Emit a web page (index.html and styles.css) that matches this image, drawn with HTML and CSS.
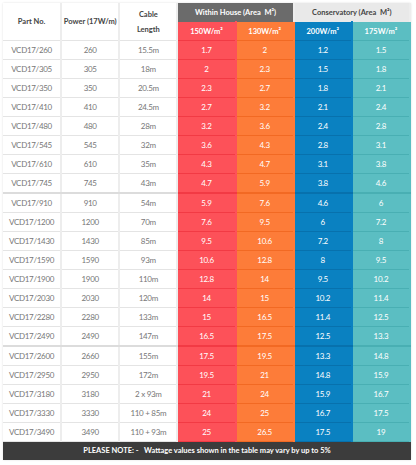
FILE: index.html
```html
<!DOCTYPE html>
<html lang="en">
<head>
    <meta charset="UTF-8">
    <meta name="viewport" content="width=device-width, initial-scale=1.0">
    <title>Heating Cable Sizes</title>
    <link rel="stylesheet" href="styles.css">
</head>
<body>
    <div class="sizes">
        <table class="size-table">
            <thead>
                <tr>
                    <th class="plain" rowspan="2">Part No.</th>
                    <th class="plain" rowspan="2">Power (17W/m)</th>
                    <th class="plain" rowspan="2">Cable<br>Length</th>
                    <th class="house" colspan="2">Within House (Area&nbsp; M²)</th>
                    <th class="conserv" colspan="2">Conservatory (Area&nbsp; M²)</th>
                </tr>
                <tr>
                    <th class="red">150W/m²</th>
                    <th class="orange">130W/m²</th>
                    <th class="blue">200W/m²</th>
                    <th class="teal">175W/m²</th>
                </tr>
            </thead>
            <tbody>
                <tr><td>VCD17/260</td><td>260</td><td>15.5m</td><td class="red">1.7</td><td class="orange">2</td><td class="blue">1.2</td><td class="teal">1.5</td></tr>
                <tr><td>VCD17/305</td><td>305</td><td>18m</td><td class="red">2</td><td class="orange">2.3</td><td class="blue">1.5</td><td class="teal">1.8</td></tr>
                <tr><td>VCD17/350</td><td>350</td><td>20.5m</td><td class="red">2.3</td><td class="orange">2.7</td><td class="blue">1.8</td><td class="teal">2.1</td></tr>
                <tr><td>VCD17/410</td><td>410</td><td>24.5m</td><td class="red">2.7</td><td class="orange">3.2</td><td class="blue">2.1</td><td class="teal">2.4</td></tr>
                <tr><td>VCD17/480</td><td>480</td><td>28m</td><td class="red">3.2</td><td class="orange">3.6</td><td class="blue">2.4</td><td class="teal">2.8</td></tr>
                <tr><td>VCD17/545</td><td>545</td><td>32m</td><td class="red">3.6</td><td class="orange">4.3</td><td class="blue">2.8</td><td class="teal">3.1</td></tr>
                <tr><td>VCD17/610</td><td>610</td><td>35m</td><td class="red">4.3</td><td class="orange">4.7</td><td class="blue">3.1</td><td class="teal">3.8</td></tr>
                <tr class="group-end"><td>VCD17/745</td><td>745</td><td>43m</td><td class="red">4.7</td><td class="orange">5.9</td><td class="blue">3.8</td><td class="teal">4.6</td></tr>
                <tr><td>VCD17/910</td><td>910</td><td>54m</td><td class="red">5.9</td><td class="orange">7.6</td><td class="blue">4.6</td><td class="teal">6</td></tr>
                <tr><td>VCD17/1200</td><td>1200</td><td>70m</td><td class="red">7.6</td><td class="orange">9.5</td><td class="blue">6</td><td class="teal">7.2</td></tr>
                <tr><td>VCD17/1430</td><td>1430</td><td>85m</td><td class="red">9.5</td><td class="orange">10.6</td><td class="blue">7.2</td><td class="teal">8</td></tr>
                <tr><td>VCD17/1590</td><td>1590</td><td>93m</td><td class="red">10.6</td><td class="orange">12.8</td><td class="blue">8</td><td class="teal">9.5</td></tr>
                <tr><td>VCD17/1900</td><td>1900</td><td>110m</td><td class="red">12.8</td><td class="orange">14</td><td class="blue">9.5</td><td class="teal">10.2</td></tr>
                <tr><td>VCD17/2030</td><td>2030</td><td>120m</td><td class="red">14</td><td class="orange">15</td><td class="blue">10.2</td><td class="teal">11.4</td></tr>
                <tr><td>VCD17/2280</td><td>2280</td><td>133m</td><td class="red">15</td><td class="orange">16.5</td><td class="blue">11.4</td><td class="teal">12.5</td></tr>
                <tr class="group-end"><td>VCD17/2490</td><td>2490</td><td>147m</td><td class="red">16.5</td><td class="orange">17.5</td><td class="blue">12.5</td><td class="teal">13.3</td></tr>
                <tr><td>VCD17/2600</td><td>2660</td><td>155m</td><td class="red">17.5</td><td class="orange">19.5</td><td class="blue">13.3</td><td class="teal">14.8</td></tr>
                <tr><td>VCD17/2950</td><td>2950</td><td>172m</td><td class="red">19.5</td><td class="orange">21</td><td class="blue">14.8</td><td class="teal">15.9</td></tr>
                <tr><td>VCD17/3180</td><td>3180</td><td>2 x 93m</td><td class="red">21</td><td class="orange">24</td><td class="blue">15.9</td><td class="teal">16.7</td></tr>
                <tr><td>VCD17/3330</td><td>3330</td><td>110 + 85m</td><td class="red">24</td><td class="orange">25</td><td class="blue">16.7</td><td class="teal">17.5</td></tr>
                <tr><td>VCD17/3490</td><td>3490</td><td>110 + 93m</td><td class="red">25</td><td class="orange">26.5</td><td class="blue">17.5</td><td class="teal">19</td></tr>
            </tbody>
        </table>
        <div class="note">PLEASE NOTE: -&nbsp;&nbsp; Wattage values shown in the table may vary by up to 5%</div>
    </div>
</body>
</html>
```

FILE: styles.css
```css
body {
    margin: 0;
    padding: 3px;
    background-color: #fff;
    font-family: Lato, "Noto Sans", sans-serif;
}
.sizes {
    width: 408px;
    box-shadow: 0 0 2px rgba(0, 0, 0, 0.12);
}
.size-table {
    width: 408px;
    border-collapse: collapse;
    table-layout: fixed;
    font-size: 8px;
    text-align: center;
}
.size-table th,
.size-table td {
    height: 18px;
    padding: 0;
    border-bottom: 1px solid #e4e4e4;
    border-right: 2px solid #ededed;
    color: #777;
    font-weight: normal;
    white-space: nowrap;
}
.size-table td {
    letter-spacing: -0.3px;
}
.size-table th {
    font-size: 7.5px;
    font-weight: bold;
    color: #444;
    line-height: 15px;
}
.size-table th.house {
    background-color: #6b6b6b;
    color: #fff;
    border-bottom-color: #6b6b6b;
}
.size-table th.conserv {
    background-color: #e9e9e9;
    color: #444;
    border-bottom-color: #e9e9e9;
}
.size-table .red {
    background-color: #fd5159;
    color: #fff;
    border-right-color: #fd5159;
    border-bottom-color: #f23a44;
}
.size-table .orange {
    background-color: #fd7c39;
    color: #fff;
    border-right-color: #fd7c39;
    border-bottom-color: #f26923;
}
.size-table .blue {
    background-color: #0a81c1;
    color: #fff;
    border-right-color: #0a81c1;
    border-bottom-color: #0771ad;
}
.size-table .teal {
    background-color: #5bbec2;
    color: #fff;
    border-right-color: #5bbec2;
    border-bottom-color: #49afb3;
}
.size-table tr.group-end td {
    border-bottom-width: 2px;
    border-bottom-color: #dcdcdc;
}
.size-table tr.group-end td.red { border-bottom-color: #f23a44; }
.size-table tr.group-end td.orange { border-bottom-color: #f26923; }
.size-table tr.group-end td.blue { border-bottom-color: #0771ad; }
.size-table tr.group-end td.teal { border-bottom-color: #49afb3; }
.note {
    height: 18px;
    line-height: 18px;
    background-color: #3c3c3c;
    color: #fff;
    font-size: 7.5px;
    font-weight: bold;
    text-align: center;
}
```
